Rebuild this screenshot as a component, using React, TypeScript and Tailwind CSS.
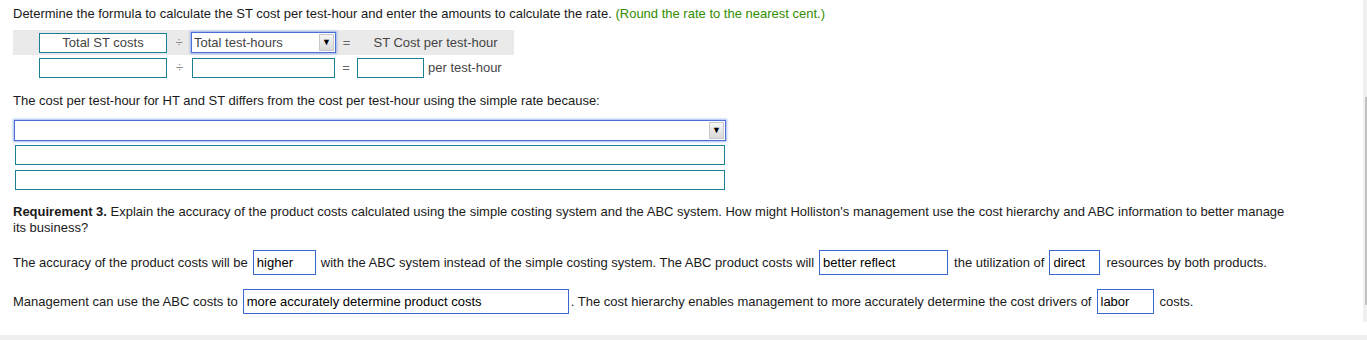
import React from 'react';

const font = { fontFamily: '"Liberation Sans", Arial, sans-serif' };

function TealBox({ className = '', children }: { className?: string; children?: React.ReactNode }) {
  return (
    <div className={`h-[20px] border border-[#1b7f95] bg-white flex items-center justify-center text-[#444] ${className}`}>
      {children}
    </div>
  );
}

function SelectBox({ className = '', label = '' }: { className?: string; label?: string }) {
  return (
    <div className={`h-[21px] border border-[#4a6fd8] bg-white shadow-[0_0_2px_1px_rgba(90,130,230,0.55)] flex items-stretch ${className}`}>
      <span className="flex-1 flex items-center pl-[2px] text-[#444] whitespace-nowrap">{label}</span>
      <span className="w-[15px] my-[1px] mr-[1px] border border-[#c8c8c8] bg-gradient-to-b from-[#f6f6f6] to-[#d9d9d9] flex items-center justify-center text-black text-[9px] leading-none">
        ▼
      </span>
    </div>
  );
}

function AnswerBox({ className = '', children }: { className?: string; children?: React.ReactNode }) {
  return (
    <div className={`h-[25px] border border-[#3867cf] bg-white flex items-center px-[3px] text-black whitespace-nowrap shrink-0 ${className}`}>
      {children}
    </div>
  );
}

export default function App() {
  return (
    <div className="w-[1367px] h-[340px] flex flex-col bg-white text-[13px] text-[#1a1a1a] overflow-hidden" style={font}>
      <div className="flex flex-1">
        <div className="flex-1 pl-[13px] pt-[6px]">
          {/* Formula header */}
          <p className="leading-[15px] whitespace-nowrap">
            Determine the formula to calculate the ST cost per test-hour and enter the amounts to calculate the rate.{' '}
            <span className="text-[#338d00]">(Round the rate to the nearest cent.)</span>
          </p>

          <div className="mt-[9px] w-[501px] h-[25px] bg-[#eaeaea] flex items-center">
            <div className="w-[26px]" />
            <TealBox className="w-[128px]">Total ST costs</TealBox>
            <span className="w-[24px] text-center text-[#888]">÷</span>
            <SelectBox className="w-[145px]" label="Total test-hours" />
            <span className="w-[21px] text-center text-[#666]">=</span>
            <span className="flex-1 text-center text-[#444] whitespace-nowrap">ST Cost per test-hour</span>
          </div>

          <div className="mt-[3px] h-[20px] flex items-center">
            <div className="w-[26px]" />
            <TealBox className="w-[128px]" />
            <span className="w-[25px] text-center text-[#888]">÷</span>
            <TealBox className="w-[143px]" />
            <span className="w-[22px] text-center text-[#666]">=</span>
            <TealBox className="w-[67px]" />
            <span className="ml-[4px] text-[#444] whitespace-nowrap">per test-hour</span>
          </div>

          <p className="mt-[15px] leading-[15px]">
            The cost per test-hour for HT and ST differs from the cost per test-hour using the simple rate because:
          </p>

          <SelectBox className="mt-[12px] w-[712px] ml-[1px]" />
          <TealBox className="mt-[4px] w-[710px] ml-[2px]" />
          <TealBox className="mt-[5px] w-[710px] ml-[2px]" />

          {/* Requirement 3 */}
          <p className="mt-[14px] leading-[16px] whitespace-nowrap">
            <span className="font-bold">Requirement 3.</span> Explain the accuracy of the product costs calculated using the simple costing system and the ABC system. How might Holliston's management use the cost hierarchy and ABC information to better manage
            <br />
            its business?
          </p>

          <div className="mt-[14px] flex items-center whitespace-nowrap">
            <span>The accuracy of the product costs will be</span>
            <AnswerBox className="ml-[5px] w-[63px]">higher</AnswerBox>
            <span className="ml-[5px]">with the ABC system instead of the simple costing system. The ABC product costs will</span>
            <AnswerBox className="ml-[5px] w-[129px]">better reflect</AnswerBox>
            <span className="ml-[6px]">the utilization of</span>
            <AnswerBox className="ml-[5px] w-[51px]">direct</AnswerBox>
            <span className="ml-[6px]">resources by both products.</span>
          </div>

          <div className="mt-[14px] flex items-center whitespace-nowrap">
            <span>Management can use the ABC costs to</span>
            <AnswerBox className="ml-[5px] w-[326px]">more accurately determine product costs</AnswerBox>
            <span className="ml-[2px]">. The cost hierarchy enables management to more accurately determine the cost drivers of</span>
            <AnswerBox className="ml-[5px] w-[57px]">labor</AnswerBox>
            <span className="ml-[6px]">costs.</span>
          </div>
        </div>

        {/* scrollbar */}
        <div className="w-[4px] flex flex-col">
          <div className="h-[322px] bg-[#f0f0f0] pl-[2px] pt-[97px]">
            <div className="h-[208px] bg-[#c1c1c1]" />
          </div>
        </div>
      </div>
      <div className="h-[5px] bg-[#f0f0f0]" />
    </div>
  );
}
